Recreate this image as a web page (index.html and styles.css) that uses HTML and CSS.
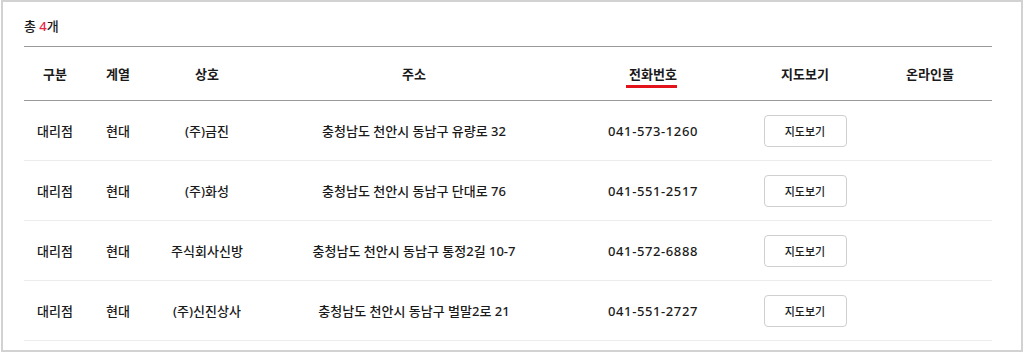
FILE: index.html
```html
<!DOCTYPE html>
<html lang="ko">
<head>
<meta charset="utf-8">
<title>대리점 목록</title>
<link rel="stylesheet" href="styles.css">
</head>
<body>
<div class="frame">
  <p class="total">총 <em>4</em>개</p>
  <table class="list">
    <colgroup>
      <col class="c1"><col class="c2"><col class="c3"><col class="c4"><col class="c5"><col class="c6"><col class="c7">
    </colgroup>
    <thead>
      <tr>
        <th>구분</th><th>계열</th><th>상호</th><th>주소</th><th><span class="sorted">전화번호</span></th><th>지도보기</th><th>온라인몰</th>
      </tr>
    </thead>
    <tbody>
      <tr><td>대리점</td><td>현대</td><td>(주)금진</td><td>충청남도 천안시 동남구 유량로 32</td><td class="tel">041-573-1260</td><td><button class="map">지도보기</button></td><td></td></tr>
      <tr><td>대리점</td><td>현대</td><td>(주)화성</td><td>충청남도 천안시 동남구 단대로 76</td><td class="tel">041-551-2517</td><td><button class="map">지도보기</button></td><td></td></tr>
      <tr><td>대리점</td><td>현대</td><td>주식회사신방</td><td>충청남도 천안시 동남구 통정2길 10-7</td><td class="tel">041-572-6888</td><td><button class="map">지도보기</button></td><td></td></tr>
      <tr><td>대리점</td><td>현대</td><td>(주)신진상사</td><td>충청남도 천안시 동남구 벌말2로 21</td><td class="tel">041-551-2727</td><td><button class="map">지도보기</button></td><td></td></tr>
    </tbody>
  </table>
</div>
</body>
</html>
```

FILE: styles.css
```css
* { box-sizing: border-box; }
html, body { margin: 0; padding: 0; background: #fff; }
body {
  font-family: "Noto Sans", "Noto Sans CJK KR", sans-serif;
  color: #1a1a1a;
}
.frame {
  margin: 0 1px;
  height: 352px;
  border: 2px solid #d2d2d2;
  padding: 14px 0 0 21px;
}
.total {
  margin: 0 0 10px;
  font-size: 13px;
  line-height: 20px;
  font-weight: 500;
}
.total em {
  font-style: normal;
  color: #e8244a;
}
.list {
  width: 968px;
  border-collapse: collapse;
  table-layout: fixed;
  border-top: 1px solid #9a9a9a;
  font-size: 13px;
}
.c1 { width: 62px; }
.c2 { width: 64px; }
.c3 { width: 114px; }
.c4 { width: 300px; }
.c5 { width: 178px; }
.c6 { width: 126px; }
.c7 { width: 124px; }
.list th {
  height: 54px;
  padding: 0;
  font-weight: 600;
  text-align: center;
  border-bottom: 1px solid #9a9a9a;
  line-height: 20px;
}
.list td {
  height: 60px;
  padding: 0;
  text-align: center;
  border-bottom: 1px solid #ececec;
  line-height: 20px;
  font-weight: 500;
}
.list td.tel {
  letter-spacing: 0.6px;
}
.sorted {
  position: relative;
  display: inline-block;
}
.sorted::after {
  content: "";
  position: absolute;
  left: -3px;
  right: 0;
  bottom: -4px;
  height: 3px;
  background: #e3131b;
}
.map {
  width: 83px;
  height: 32px;
  border: 1px solid #cfcfcf;
  border-radius: 4px;
  background: #fff;
  color: #1a1a1a;
  font-family: inherit;
  font-size: 11px;
  font-weight: 500;
  padding: 0;
  cursor: pointer;
}
```
